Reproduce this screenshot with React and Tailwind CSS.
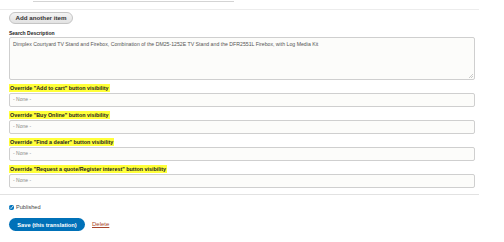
import { useState } from 'react';

const overrides = [
  'Override "Add to cart" button visibility',
  'Override "Buy Online" button visibility',
  'Override "Find a dealer" button visibility',
  'Override "Request a quote/Register interest" button visibility',
];

function Label({ children, highlight = false }) {
  return (
    <div className="mt-[4px] h-[8px] leading-[8px] text-[5.4px] font-bold text-[#222]">
      <span className={highlight ? 'bg-[#ffff3a] px-[1px] py-[1px]' : ''}>{children}</span>
    </div>
  );
}

function SelectBox() {
  return (
    <div className="mt-[1px] h-[14px] border border-[#cfcfcf] rounded-[2px] bg-[#fcfcfa] flex items-center pl-[3px] text-[5px] text-[#888]">
      - None -
    </div>
  );
}

export default function App() {
  const [published, setPublished] = useState(true);

  return (
    <div className="w-[504px] h-[242px] bg-white overflow-hidden font-['Liberation_Sans',sans-serif]">
      <div className="w-[479px]">
        <div className="ml-[33px] w-[201px] h-[2px] border-b border-[#d4d4d4]" />
        <div className="mt-[7px] border-t border-[#ececec]" />
        <div className="pl-[9px] pr-[4px]">
          <button className="mt-[2px] h-[12px] w-[64px] rounded-full border border-[#c5c5c5] bg-gradient-to-b from-[#f4f4f4] to-[#e2e2e2] text-[6.2px] font-semibold text-[#333] flex items-center justify-center">
            Add another item
          </button>
          <div className="mt-[5px] h-[8px] leading-[8px] text-[5px] font-bold text-[#222]">Search Description</div>
          <div className="relative h-[43px] border border-[#cfcfcf] rounded-[2px] bg-[#fcfcfa] px-[3px] pt-[3px] text-[5.2px] text-[#555]">
            Dimplex Courtyard TV Stand and Firebox, Combination of the DM25-1252E TV Stand and the DFR2551L Firebox, with Log Media Kit
            <svg className="absolute right-[1px] bottom-[1px]" width="4" height="4" viewBox="0 0 4 4">
              <path d="M4 0 L0 4 M4 2 L2 4" stroke="#aaa" strokeWidth="0.6" />
            </svg>
          </div>
          {overrides.map(o => (
            <div key={o}>
              <Label highlight>{o}</Label>
              <SelectBox />
            </div>
          ))}
        </div>
        <div className="mt-[6px] border-t border-[#e2e2e2]" />
        <div className="pl-[9px]">
          <label className="mt-[8px] flex items-center gap-[2px] text-[5.6px] text-[#444]">
            <input
              type="checkbox"
              checked={published}
              onChange={() => setPublished(!published)}
              className="w-[5px] h-[5px] m-0 accent-[#0074bd]"
            />
            Published
          </label>
          <div className="mt-[7px] flex items-center gap-[7px]">
            <button className="h-[13px] w-[76px] rounded-full bg-[#0071b8] text-white text-[5.7px] font-bold flex items-center justify-center">
              Save (this translation)
            </button>
            <a href="#" className="text-[6px] text-[#a8442b] underline">Delete</a>
          </div>
        </div>
      </div>
    </div>
  );
}
